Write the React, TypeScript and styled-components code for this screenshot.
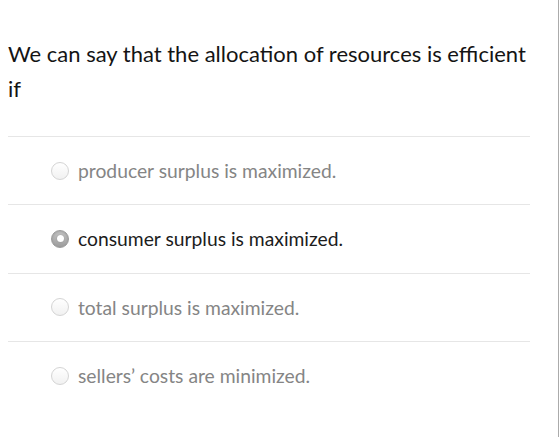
import React, { useState } from 'react';
import styled, { createGlobalStyle } from 'styled-components';

const GlobalStyle = createGlobalStyle`
  html, body {
    margin: 0;
    padding: 0;
    background: #ffffff;
  }
  body {
    font-family: Lato, 'Open Sans', sans-serif;
  }
`;

const Frame = styled.div`
  box-sizing: border-box;
  width: 559px;
  height: 437px;
  padding: 0 28px 0 8px;
  border-right: 1px solid #ababab;
  overflow: hidden;
`;

const Question = styled.h2`
  margin: 0;
  padding: 36px 0 30px;
  font-size: 22px;
  line-height: 35px;
  font-weight: 400;
  color: #141414;
`;

const OptionList = styled.div`
  display: flex;
  flex-direction: column;
`;

const OptionRow = styled.label<{ $selected: boolean }>`
  box-sizing: border-box;
  height: 68.3px;
  display: flex;
  align-items: center;
  gap: 9px;
  padding-left: 43px;
  border-top: 1px solid #e6e6e6;
  font-size: 19.3px;
  color: ${(p) => (p.$selected ? '#1c1c1c' : '#858585')};
  cursor: pointer;
`;

const Radio = styled.span<{ $selected: boolean }>`
  box-sizing: border-box;
  width: 18px;
  height: 18px;
  flex-shrink: 0;
  border-radius: 50%;
  display: flex;
  align-items: center;
  justify-content: center;
  border: 1px solid ${(p) => (p.$selected ? '#9a9a9a' : '#d4d4d4')};
  background: ${(p) =>
    p.$selected
      ? 'linear-gradient(180deg, #c4c4c4 0%, #9c9c9c 100%)'
      : 'linear-gradient(180deg, #ffffff 0%, #f1f1f1 100%)'};
  box-shadow: ${(p) => (p.$selected ? 'inset 0 1px 2px rgba(0,0,0,0.15)' : 'none')};
`;

const Dot = styled.span`
  width: 7px;
  height: 7px;
  border-radius: 50%;
  background: #ffffff;
  box-shadow: 0 0 1px rgba(0, 0, 0, 0.25);
`;

const choices = [
  'producer surplus is maximized.',
  'consumer surplus is maximized.',
  'total surplus is maximized.',
  'sellers\u2019 costs are minimized.',
];

export default function App() {
  const [picked, setPicked] = useState(1);

  return (
    <>
      <GlobalStyle />
      <Frame>
        <Question>We can say that the allocation of resources is efficient if</Question>
        <OptionList>
          {choices.map((text, i) => (
            <OptionRow key={text} $selected={picked === i} onClick={() => setPicked(i)}>
              <Radio $selected={picked === i}>{picked === i && <Dot />}</Radio>
              {text}
            </OptionRow>
          ))}
        </OptionList>
      </Frame>
    </>
  );
}
